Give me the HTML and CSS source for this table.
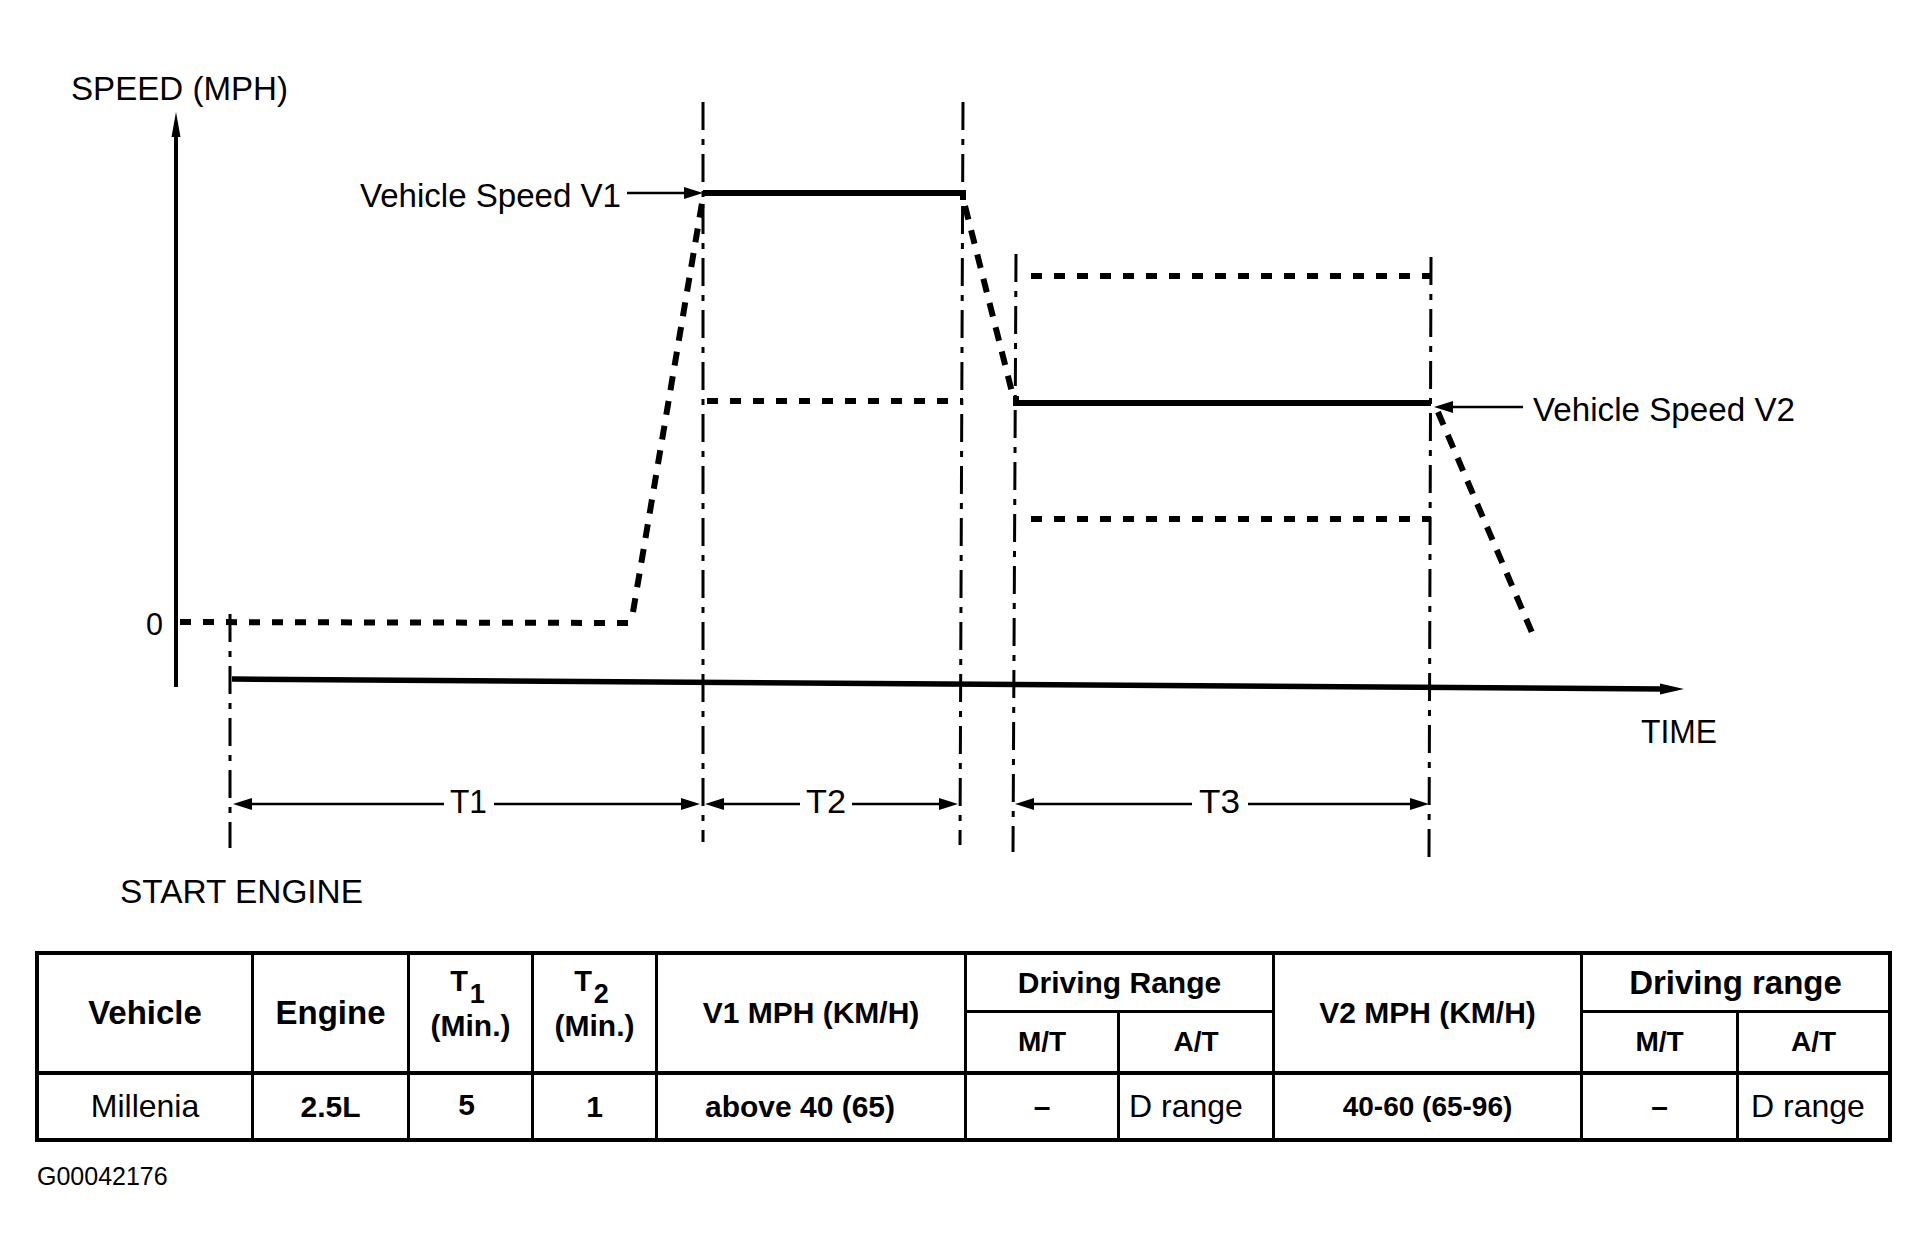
FILE: index.html
```html
<!DOCTYPE html>
<html lang="en">
<head>
<meta charset="utf-8">
<title>Vehicle speed test chart</title>
<link rel="stylesheet" href="styles.css">
</head>
<body>
<div class="page">
  <svg class="chart" width="1928" height="940" viewBox="0 0 1928 940" xmlns="http://www.w3.org/2000/svg">
    <!-- axes -->
    <line class="ln axis-y" x1="176" y1="132" x2="176" y2="687"/>
    <polygon class="head" points="176,112 171.5,137 180.5,137"/>
    <path class="ln axis-x" d="M232 679 L1664 689"/>
    <polygon class="head" points="1684,689 1660,683.5 1660,694.5"/>

    <!-- dash-dot guide lines -->
    <path class="ln guide" d="M230 614 V848"/>
    <path class="ln guide" d="M703 102 V842"/>
    <path class="ln guide" d="M963 102 L960 845"/>
    <path class="ln guide" d="M1016 254 L1013 852"/>
    <path class="ln guide" d="M1431 257 L1429 857"/>

    <!-- speed traces -->
    <path class="ln dots" d="M180 622 L630 623"/>
    <path class="ln slope" d="M633 612 L702 203"/>
    <path class="ln thick" d="M703 193 H963 V200"/>
    <path class="ln slope" d="M965 206 L1014 400"/>
    <path class="ln dots" d="M707 401 H963"/>
    <path class="ln dots" d="M1031 276 H1431"/>
    <path class="ln thick" d="M1016 396 V403 H1431"/>
    <path class="ln dots" d="M1031 519 H1431"/>
    <path class="ln slope" d="M1438 412 L1536 642"/>

    <!-- labels -->
    <text class="lbl" x="71" y="100" textLength="217" lengthAdjust="spacingAndGlyphs">SPEED (MPH)</text>
    <text class="lbl zero" x="146" y="635" textLength="17" lengthAdjust="spacingAndGlyphs">0</text>
    <text class="lbl" x="360" y="207" textLength="261" lengthAdjust="spacingAndGlyphs">Vehicle Speed V1</text>
    <line class="ln pointer" x1="627" y1="193" x2="688" y2="193"/>
    <polygon class="head" points="703,193 684,187 684,199"/>
    <text class="lbl" x="1533" y="421" textLength="262" lengthAdjust="spacingAndGlyphs">Vehicle Speed V2</text>
    <line class="ln pointer" x1="1523" y1="407" x2="1450" y2="407"/>
    <polygon class="head" points="1434,407 1453,401 1453,413"/>
    <text class="lbl" x="1641" y="743" textLength="76" lengthAdjust="spacingAndGlyphs">TIME</text>
    <text class="lbl" x="120" y="903" textLength="243" lengthAdjust="spacingAndGlyphs">START ENGINE</text>

    <!-- dimension lines -->
    <line class="ln pointer" x1="240" y1="804" x2="444" y2="804"/>
    <line class="ln pointer" x1="494" y1="804" x2="690" y2="804"/>
    <polygon class="head" points="233,804 252,798 252,810"/>
    <polygon class="head" points="700,804 681,798 681,810"/>
    <text class="lbl" x="450" y="813" textLength="37" lengthAdjust="spacingAndGlyphs">T1</text>

    <line class="ln pointer" x1="712" y1="804" x2="800" y2="804"/>
    <line class="ln pointer" x1="852" y1="804" x2="950" y2="804"/>
    <polygon class="head" points="705,804 724,798 724,810"/>
    <polygon class="head" points="958,804 939,798 939,810"/>
    <text class="lbl" x="806" y="813" textLength="40" lengthAdjust="spacingAndGlyphs">T2</text>

    <line class="ln pointer" x1="1022" y1="804" x2="1192" y2="804"/>
    <line class="ln pointer" x1="1248" y1="804" x2="1420" y2="804"/>
    <polygon class="head" points="1015,804 1034,798 1034,810"/>
    <polygon class="head" points="1429,804 1410,798 1410,810"/>
    <text class="lbl" x="1199" y="813" textLength="41" lengthAdjust="spacingAndGlyphs">T3</text>
  </svg>

  <table class="spec">
    <colgroup>
      <col class="w-vehicle"><col class="w-engine"><col class="w-t"><col class="w-t">
      <col class="w-speed"><col class="w-mt"><col class="w-at">
      <col class="w-speed2"><col class="w-mt2"><col class="w-at2">
    </colgroup>
    <tr class="r1">
      <th rowspan="2" class="span big">Vehicle</th>
      <th rowspan="2" class="span big">Engine</th>
      <th rowspan="2" class="span tcell"><span class="t">T<sub>1</sub></span><span class="min">(Min.)</span></th>
      <th rowspan="2" class="span tcell"><span class="t">T<sub>2</sub></span><span class="min">(Min.)</span></th>
      <th rowspan="2" class="span mid">V1 MPH (KM/H)</th>
      <th colspan="2" class="mid group">Driving Range</th>
      <th rowspan="2" class="span mid">V2 MPH (KM/H)</th>
      <th colspan="2" class="big group last">Driving range</th>
    </tr>
    <tr class="r2">
      <th class="sm">M/T</th>
      <th class="sm">A/T</th>
      <th class="sm">M/T</th>
      <th class="sm last">A/T</th>
    </tr>
    <tr class="r3">
      <td class="reg">Millenia</td>
      <td>2.5L</td>
      <td class="raise">5</td>
      <td>1</td>
      <td class="shift">above 40 (65)</td>
      <td>–</td>
      <td class="reg left">D range</td>
      <td class="b28">40-60 (65-96)</td>
      <td>–</td>
      <td class="reg left2 last">D range</td>
    </tr>
  </table>

  <div class="code">G00042176</div>
</div>
</body>
</html>
```

FILE: styles.css
```css
html, body {
  margin: 0;
  padding: 0;
  background: #fff;
}

body {
  width: 1928px;
  height: 1258px;
  overflow: hidden;
  color: #000;
  font-family: "Liberation Sans", Arial, sans-serif;
}

.page {
  display: flex;
  flex-direction: column;
}

/* ---------- chart ---------- */
.chart {
  display: block;
}

.chart .ln {
  fill: none;
  stroke: #000;
  stroke-linecap: butt;
}

.chart .axis-y { stroke-width: 4; }
.chart .axis-x { stroke-width: 5.5; }
.chart .thick { stroke-width: 6; stroke-linejoin: miter; }
.chart .guide { stroke-width: 3; stroke-dasharray: 28 9 6 9; }
.chart .dots { stroke-width: 6; stroke-dasharray: 11 12; }
.chart .slope { stroke-width: 6; stroke-dasharray: 14 11; }
.chart .pointer { stroke-width: 2.5; }

.chart .head {
  fill: #000;
  stroke: none;
}

.chart .lbl {
  fill: #000;
  font-family: "Liberation Sans", Arial, sans-serif;
  font-size: 34px;
}

.chart .zero {
  font-size: 31px;
}

/* ---------- table ---------- */
.spec {
  margin: 11px 0 0 35px;
  width: 1857px;
  table-layout: fixed;
  border-collapse: separate;
  border-spacing: 0;
  border: 4px solid #000;
  font-family: "Liberation Sans", Arial, sans-serif;
}

.w-vehicle { width: 215px; }
.w-engine { width: 156px; }
.w-t { width: 124px; }
.w-speed { width: 309px; }
.w-mt { width: 153px; }
.w-at { width: 155px; }
.w-speed2 { width: 308px; }
.w-mt2 { width: 156px; }
.w-at2 { width: 149px; }

.spec th,
.spec td {
  padding: 0;
  text-align: center;
  vertical-align: middle;
  border-right: 3px solid #000;
  white-space: nowrap;
  font-weight: 700;
  font-size: 30px;
}

.spec .last { border-right: none; }

.spec .r1 { height: 58px; }
.spec .r2 { height: 62px; }
.spec .r3 { height: 63px; }

.spec .span { border-bottom: 4px solid #000; }
.spec .group { border-bottom: 3px solid #000; }
.spec .r2 th { border-bottom: 4px solid #000; }

.spec .big { font-size: 33px; }
.spec .mid { font-size: 30px; }
.spec .sm { font-size: 28px; }

.spec .tcell {
  vertical-align: top;
  padding-top: 11px;
}

.spec .t {
  display: block;
  font-size: 29px;
  line-height: 30px;
  padding-right: 6px;
}

.spec .t sub {
  font-size: 27px;
  line-height: 0;
  vertical-align: -12px;
  margin-left: 2px;
}

.spec .min {
  display: block;
  margin-top: 15px;
  font-size: 30px;
  line-height: 30px;
}

.spec .reg {
  font-weight: 400;
  font-size: 32px;
}

.spec .b28 { font-size: 28px; }
.spec .shift { padding-right: 22px; }
.spec .raise { padding-bottom: 4px; padding-right: 8px; }

.spec .left {
  text-align: left;
  padding-left: 9px;
}

.spec .left2 {
  text-align: left;
  padding-left: 12px;
}

/* ---------- figure code ---------- */
.code {
  margin: 22px 0 0 37px;
  font-size: 25px;
  line-height: 25px;
}
```
